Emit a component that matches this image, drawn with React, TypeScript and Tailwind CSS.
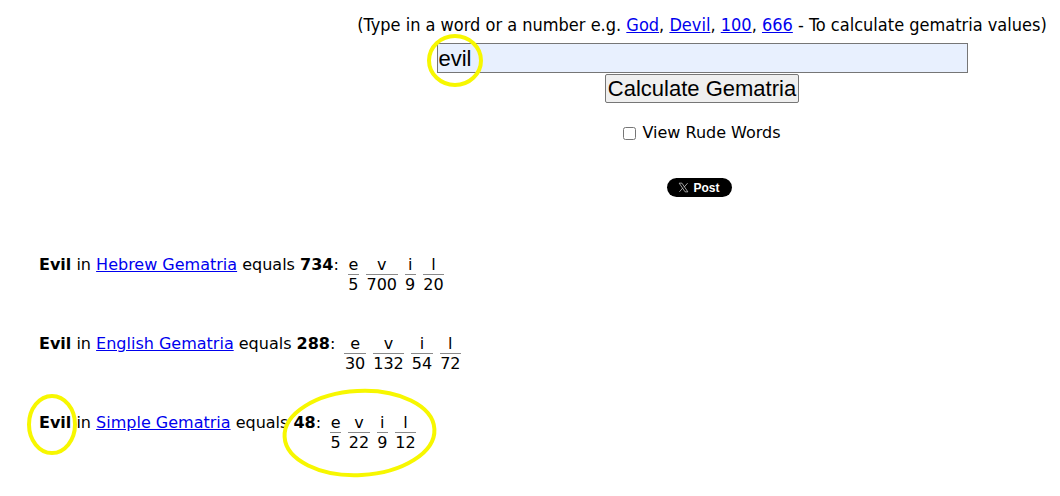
import React from "react";

const rows = [
  {
    name: "Hebrew Gematria",
    total: "734",
    values: [
      ["e", "5"],
      ["v", "700"],
      ["i", "9"],
      ["l", "20"],
    ],
  },
  {
    name: "English Gematria",
    total: "288",
    values: [
      ["e", "30"],
      ["v", "132"],
      ["i", "54"],
      ["l", "72"],
    ],
  },
  {
    name: "Simple Gematria",
    total: "48",
    values: [
      ["e", "5"],
      ["v", "22"],
      ["i", "9"],
      ["l", "12"],
    ],
  },
];

function XLogo() {
  return (
    <svg viewBox="0 0 24 24" className="w-[11px] h-[11px]" fill="none" stroke="#d4d4d4" strokeWidth="1.6">
      <path d="M2.5 2.5h6l13 19h-6z" />
      <path d="M21 2.5l-7.6 8.6M3 21.5l7.6-8.6" />
    </svg>
  );
}

function Breakdown({ values }: { values: string[][] }) {
  return (
    <div className="flex gap-[7px] ml-[9px]">
      {values.map(([letter, num], i) => (
        <div key={i} className="flex flex-col items-stretch text-center">
          <div className="leading-[18px] border-b border-[#8a8a8a] px-[0.5px]">{letter}</div>
          <div className="leading-[20px] px-[0.5px]">{num}</div>
        </div>
      ))}
    </div>
  );
}

export default function App() {
  return (
    <div className="relative w-[1060px] h-[496px] bg-white overflow-hidden text-black font-['DejaVu_Sans',sans-serif]">
      <div className="ml-[344px] w-[716px] flex flex-col items-center pt-[14px]">
        <p className="text-[18px] leading-[22px] font-['DejaVu_Sans_Condensed','DejaVu_Sans',sans-serif] whitespace-nowrap">
          (Type in a word or a number e.g.{" "}
          <a className="text-[#0000ee] underline">God</a>,{" "}
          <a className="text-[#0000ee] underline">Devil</a>,{" "}
          <a className="text-[#0000ee] underline">100</a>,{" "}
          <a className="text-[#0000ee] underline">666</a> - To calculate gematria values)
        </p>
        <input
          readOnly
          value="evil"
          className="mt-[7px] w-[531px] h-[30px] bg-[#e8f0fe] border border-[#767676] px-[1px] text-[22px] font-['Liberation_Sans',Arial,sans-serif] outline-none"
        />
        <button className="mt-[1px] h-[29px] px-[2px] bg-[#efefef] border border-[#767676] rounded-[2px] text-[22px] leading-[25px] font-['Liberation_Sans',Arial,sans-serif]">
          Calculate Gematria
        </button>
        <label className="mt-[20px] flex items-center text-[16px] leading-[20px]">
          <input type="checkbox" className="w-[13px] h-[13px] mr-[6px]" />
          View Rude Words
        </label>
        <div className="mt-[35px] -ml-[6px] w-[65px] h-[19px] rounded-full bg-black flex items-center justify-center gap-[4px] text-white text-[12px] font-bold font-['Liberation_Sans',Arial,sans-serif]">
          <XLogo />
          <span>Post</span>
        </div>
      </div>

      <div className="mt-[59px] pl-[39px] flex flex-col gap-[40px] text-[16px]">
        {rows.map((r) => (
          <div key={r.name} className="flex items-start">
            <span className="leading-[18px] whitespace-nowrap">
              <b>Evil</b> in <a className="text-[#0000ee] underline">{r.name}</a> equals <b>{r.total}</b>:
            </span>
            <Breakdown values={r.values} />
          </div>
        ))}
      </div>

      <svg className="absolute inset-0 pointer-events-none" width="1060" height="496">
        <g fill="none" stroke="#f7f700" strokeWidth="4">
          <ellipse cx="455" cy="60.5" rx="26" ry="24.5" />
          <ellipse cx="52" cy="424.5" rx="23" ry="28.5" />
          <ellipse cx="359.5" cy="433" rx="75" ry="42" transform="rotate(-3 359.5 433)" />
        </g>
      </svg>
    </div>
  );
}
